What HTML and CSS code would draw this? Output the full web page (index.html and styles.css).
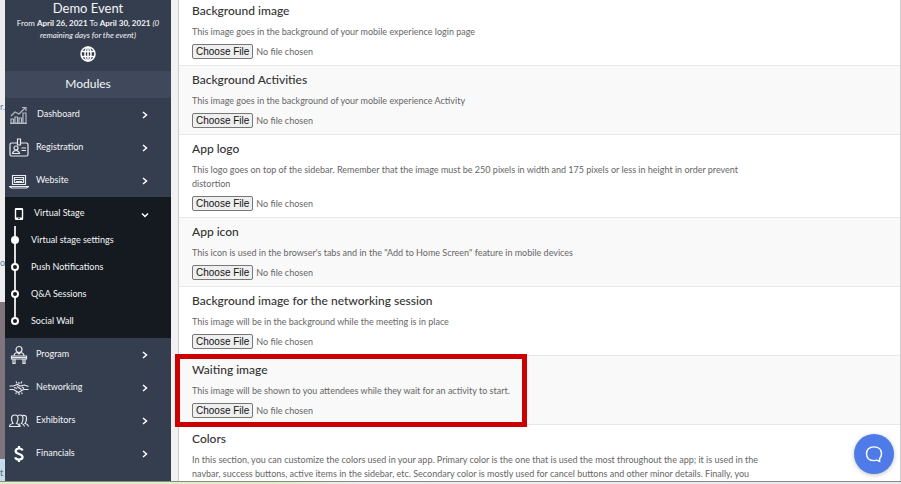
FILE: index.html
```html
<!DOCTYPE html>
<html lang="en">
  <head>
    <meta charset="UTF-8" />
    <meta name="viewport" content="width=device-width, initial-scale=1.0" />
    <title>Demo Event</title>
    <link rel="stylesheet" href="styles.css">
  </head>
  <body>
    <div class="app">
      <div class="backdrop">
        <div class="backdrop-page"><span class="backdrop-word">r.</span><span class="backdrop-word">o</span></div>
        <div class="backdrop-photo"></div>
        <div class="backdrop-blue">t</div>
      </div>

      <aside class="sidebar">
        <header class="event">
          <h1 class="event-name">Demo Event</h1>
          <p class="event-dates">From <b>April 26, 2021</b> To <b>April 30, 2021</b> <i>(0 remaining days for the event)</i></p>
          <svg class="globe" viewBox="0 0 16 16">
            <circle cx="8" cy="8" r="7" />
            <ellipse cx="8" cy="8" rx="3" ry="7" />
            <path d="M1.500 5.500h13M1.500 10.500h13M8 1v14" />
          </svg>
        </header>
        <h2 class="modules">Modules</h2>

        <nav class="menu">
          <a class="item item-first" href="#">
            <svg class="icon icon-dim" viewBox="0 0 20 20">
              <path d="M2 18v-4h2.500v4zM6 18v-6h2.500v6zM10 18v-5h2.500v5zM14 18V8h3v10zM1 18.500h17" />
              <path d="M2 11l4-4 4 2 6-6M13 2.500h4v3.500" />
            </svg>
            <span class="label">Dashboard</span>
            <svg class="chevron" viewBox="0 0 8 8"><path d="M2 1l3.500 3L2 7" /></svg>
          </a>
          <a class="item" href="#">
            <svg class="icon" viewBox="0 0 20 20">
              <path d="M8 5H2.500Q1 5 1 6.500v10Q1 18 2.500 18h15q1.500 0 1.500-1.500v-10Q19 5 17.500 5H12M8.500 1h3v6h-3z" />
              <circle cx="7" cy="10" r="2" />
              <path d="M3.500 15.500q.5-3 3.500-3t3.500 3zM12.500 10H17M12.500 12.500H17" />
            </svg>
            <span class="label">Registration</span>
            <svg class="chevron" viewBox="0 0 8 8"><path d="M2 1l3.500 3L2 7" /></svg>
          </a>
          <a class="item" href="#">
            <svg class="icon" viewBox="0 0 20 20">
              <path d="M3.500 13.500V4.500h13v9zM.5 15.500h19l-2 1.500h-15z" />
              <path d="M5.500 6.500h9v5h-9zM6 8.500h8M7 10.500h6" />
            </svg>
            <span class="label">Website</span>
            <svg class="chevron" viewBox="0 0 8 8"><path d="M2 1l3.500 3L2 7" /></svg>
          </a>

          <div class="group">
            <a class="item item-open" href="#">
              <svg class="icon" viewBox="0 0 20 20">
                <path class="solid" fill-rule="evenodd" d="M7 4h6q1.200 0 1.200 1.200v9.600Q14.200 16 13 16H7q-1.200 0-1.200-1.200V5.200Q5.800 4 7 4zM7.200 6v7.500h5.600V6zM9 14.200v.8h2v-.8z" />
              </svg>
              <span class="label">Virtual Stage</span>
              <svg class="chevron" viewBox="0 0 8 8"><path d="M1 2.500L4 5.500l3-3" /></svg>
            </a>
            <ul class="submenu">
              <li class="subitem"><span class="dot dot-on"></span><a href="#">Virtual stage settings</a></li>
              <li class="subitem"><span class="dot"></span><a href="#">Push Notifications</a></li>
              <li class="subitem"><span class="dot"></span><a href="#">Q&amp;A Sessions</a></li>
              <li class="subitem"><span class="dot"></span><a href="#">Social Wall</a></li>
            </ul>
          </div>

          <a class="item" href="#">
            <svg class="icon" viewBox="0 0 20 20">
              <circle cx="10" cy="4.500" r="3" />
              <path d="M5 11q0-3 3.500-3.500L10 9l1.500-1.500Q15 8 15 11M2.500 11h15v3h-15zM2.500 12.500h15M4 14v4.500h2V14M14 14v4.500h2V14" />
            </svg>
            <span class="label">Program</span>
            <svg class="chevron" viewBox="0 0 8 8"><path d="M2 1l3.500 3L2 7" /></svg>
          </a>
          <a class="item" href="#">
            <svg class="icon" viewBox="0 0 20 20">
              <path d="M.5 8h4l4-1.500L11 8l4.500-1 4 1.500M.5 11.500h4l5 3 5-3h5M8 8.500l4.500 3M5 9.500l3 1M13 9l2 1.500" />
              <path d="M10 4v2M7 3.500l1.200 2M13 3.500l-1.200 2M10 15v2M7.500 14.500l-.8 1.500M12.500 14.500l.8 1.500" />
            </svg>
            <span class="label">Networking</span>
            <svg class="chevron" viewBox="0 0 8 8"><path d="M2 1l3.500 3L2 7" /></svg>
          </a>
          <a class="item" href="#">
            <svg class="icon" viewBox="0 0 20 20">
              <path d="M.5 15.500q0-2.500 3.500-3Q2.500 10.500 2.500 7.500 2.500 4 5.800 4t3.200 3.500q0 3-1.500 5 2.500.5 3 3zM9 4.500q1-.5 2-.5 3 0 3 3.500 0 3-1.500 5 2.500.5 3 3M13.500 4.500q4-1 4 3 0 3-1.500 5 3 .5 3.500 3" />
              <path d="M9.800 12.500l1.700 3" />
            </svg>
            <span class="label">Exhibitors</span>
            <svg class="chevron" viewBox="0 0 8 8"><path d="M2 1l3.500 3L2 7" /></svg>
          </a>
          <a class="item" href="#">
            <svg class="icon icon-bold" viewBox="0 0 20 20">
              <path d="M13.500 6.500Q13 4.500 10 4.500T6.600 7Q6.600 9 10 10t3.600 3q0 2.500-3.600 2.500t-3.600-2.200M10 2v2.500M10 15.500V18" />
            </svg>
            <span class="label">Financials</span>
            <svg class="chevron" viewBox="0 0 8 8"><path d="M2 1l3.500 3L2 7" /></svg>
          </a>
          <a class="item" href="#" aria-label="More">
            <svg class="icon" viewBox="0 0 20 20"><circle cx="9" cy="13" r="4" /></svg>
          </a>
        </nav>
      </aside>

      <main class="content">
        <section class="setting">
          <h3><label for="bg-image">Background image</label></h3>
          <p>This image goes in the background of your mobile experience login page</p>
          <input type="file" id="bg-image" />
        </section>
        <section class="setting">
          <h3><label for="bg-activities">Background Activities</label></h3>
          <p>This image goes in the background of your mobile experience Activity</p>
          <input type="file" id="bg-activities" />
        </section>
        <section class="setting">
          <h3><label for="app-logo">App logo</label></h3>
          <p>This logo goes on top of the sidebar. Remember that the image must be 250 pixels in width and 175 pixels or less in height in order prevent distortion</p>
          <input type="file" id="app-logo" />
        </section>
        <section class="setting">
          <h3><label for="app-icon">App icon</label></h3>
          <p>This icon is used in the browser's tabs and in the "Add to Home Screen" feature in mobile devices</p>
          <input type="file" id="app-icon" />
        </section>
        <section class="setting">
          <h3><label for="bg-networking">Background image for the networking session</label></h3>
          <p>This image will be in the background while the meeting is in place</p>
          <input type="file" id="bg-networking" />
        </section>
        <section class="setting setting-marked">
          <h3><label for="waiting-image">Waiting image</label></h3>
          <p>This image will be shown to you attendees while they wait for an activity to start.</p>
          <input type="file" id="waiting-image" />
        </section>
        <section class="setting">
          <h3>Colors</h3>
          <p>In this section, you can customize the colors used in your app. Primary color is the one that is used the most throughout the app; it is used in the navbar, success buttons, active items in the sidebar, etc. Secondary color is mostly used for cancel buttons and other minor details. Finally, you</p>
        </section>
      </main>
      <div class="taskbar"></div>
    </div>

    <button class="chat" type="button" aria-label="Chat">
      <svg viewBox="0 0 20 20">
        <path d="M10 3.500c4.500 0 6.800 2.600 6.800 6.200 0 1.900-.6 3.400-1.700 4.500v2.600l-2.500-1.200c-.8.300-1.700.4-2.600.4-4.500 0-6.800-2.700-6.800-6.300S5.500 3.500 10 3.500z" />
      </svg>
    </button>
  </body>
</html>
```

FILE: styles.css
```css
*,
*::after {
  margin: 0;
  padding: 0;
  box-sizing: border-box;
}

body {
  font-family: Lato, "Liberation Sans", sans-serif;
  font-size: 9px;
  color: #666;
}

a {
  color: inherit;
  text-decoration: none;
}

.app {
  display: grid;
  grid-template-columns: 5px 166px 1fr;
  grid-template-rows: minmax(0, 1fr) 3px;
  height: 100vh;
  overflow: hidden;
  background: #f1f1f1;
}

/* Page showing behind the window */
.backdrop {
  display: flex;
  flex-direction: column;
  overflow: hidden;
  line-height: 12px;
}

.backdrop-page {
  display: flex;
  flex: 1;
  flex-direction: column;
  gap: 144px;
  padding-top: 101px;
  background: #ededef;
  color: #4f7f9f;
}

.backdrop-photo {
  height: 157px;
  background: #80757d;
}

.backdrop-blue {
  height: 22px;
  padding-top: 8px;
  background: #c4dcec;
}

.taskbar {
  grid-column: 1 / -1;
  border-top: 1px solid #8a8a8a;
  background: linear-gradient(90deg, #dff0c4 0, #dff0c4 30%, #eee 40%, #e8eaed 100%);
}

/* Sidebar */
.sidebar {
  overflow: hidden;
  background: #353e4f;
  color: #f4f5f7;
}

.event {
  display: flex;
  flex-direction: column;
  align-items: center;
  height: 71px;
  text-align: center;
}

.event-name {
  font-size: 13px;
  font-weight: 400;
  line-height: 17px;
}

.event-dates {
  padding: 0 8px;
  font-size: 8px;
  line-height: 12px;
}

.globe {
  width: 16px;
  height: 16px;
  margin-top: 5px;
  fill: none;
  stroke: #fff;
  stroke-width: 1.5;
}

.modules {
  height: 27px;
  background: #3f495b;
  font-size: 12px;
  font-weight: 400;
  line-height: 26px;
  text-align: center;
}

.item {
  display: flex;
  align-items: center;
  height: 33px;
  padding: 0 22px 0 4px;
  gap: 7px;
}

.item-first {
  gap: 8px;
}

.label {
  padding-bottom: 3px;
}

.icon {
  width: 20px;
  height: 20px;
  fill: none;
  stroke: #e8eaee;
  stroke-width: 1.2;
}

.icon-dim {
  stroke: #b4b9c2;
}

.icon-bold {
  stroke: #fff;
  stroke-width: 2.2;
}

.solid {
  fill: #fff;
  stroke: none;
}

.chevron {
  width: 8px;
  height: 8px;
  margin: 1px 0 0 auto;
  fill: none;
  stroke: #fff;
  stroke-width: 1.5;
}

.group {
  padding-bottom: 4px;
  background: #151a20;
}

.item-open {
  height: 29px;
  padding-top: 5px;
  gap: 5px;
}

.submenu {
  list-style: none;
}

.subitem {
  display: flex;
  align-items: center;
  height: 27px;
  padding-left: 6px;
  gap: 12px;
  /* connecting line through the dots */
  background: linear-gradient(#ddd, #ddd) 9px 0 / 2px 100% no-repeat;
}

.subitem:last-child {
  background-size: 2px 50%;
}

.dot {
  width: 8px;
  height: 8px;
  border: 2px solid #fff;
  border-radius: 50%;
  background: #151a20;
}

.dot-on {
  background: #fff;
}

/* Settings list */
.content {
  overflow-x: visible;
  overflow-y: clip;
  margin-left: 7px;
  border-right: 1px solid #ccc;
  border-left: 1px solid #ccc;
  background: #fff;
}

.setting {
  padding: 6px 13px;
  border-bottom: 1px solid #e8e8e8;
}

.setting:first-child {
  padding-top: 3px;
}

.setting:nth-child(even) {
  background: #f9f9f9;
}

.setting h3 {
  color: #333;
  font-size: 12px;
  font-weight: 500;
  line-height: 16px;
}

.setting p {
  max-width: 580px;
  margin: 6px 0 5px;
  line-height: 14px;
}

.setting input {
  display: block;
  height: 15px;
  font-family: inherit;
  font-size: 9px;
  line-height: 15px;
}

.setting input::file-selector-button {
  box-sizing: border-box;
  height: 15px;
  margin-right: 3px;
  padding: 0 3px;
  border: 1px solid #777;
  border-radius: 2px;
  background: #efefef;
  color: #111;
  font-family: "Liberation Sans", sans-serif;
  font-size: 10px;
  line-height: 13px;
}

.setting-marked {
  position: relative;
}

.setting-marked::after {
  content: "";
  position: absolute;
  top: -2px;
  bottom: -3px;
  left: -4px;
  width: 352px;
  border: 5px solid #c00;
  pointer-events: none;
}

.chat {
  position: fixed;
  right: 7px;
  bottom: 10px;
  display: grid;
  place-items: center;
  width: 40px;
  height: 40px;
  border: none;
  border-radius: 50%;
  background: #4f7be8;
  box-shadow: 0 1px 4px rgba(0, 0, 0, 0.25);
}

.chat svg {
  width: 22px;
  height: 22px;
  fill: none;
  stroke: #fff;
  stroke-width: 1.3;
}
```
